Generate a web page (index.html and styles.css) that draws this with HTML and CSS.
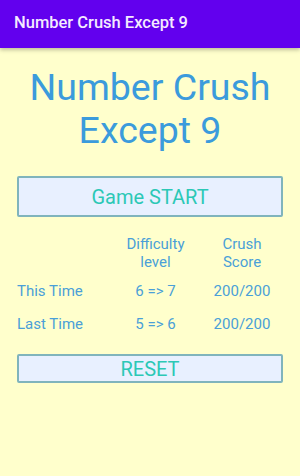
FILE: index.html
```html
<!DOCTYPE html>
<html lang="en">
<head>
    <meta charset="UTF-8">
    <meta name="viewport" content="width=device-width, initial-scale=1.0">
    <title>Number Crush Except 9</title>
    <link rel="stylesheet" href="styles.css">
</head>
<body>

<!-- App Bar -->
<div class="app-bar">Number Crush Except 9</div>

<div class="main">
    <h1 class="game-title">Number Crush<br>Except 9</h1>

    <button class="btn start-btn">Game START</button>

    <!-- Score Table -->
    <div class="score-table">
        <div class="cell"></div>
        <div class="cell head">Difficulty<br>level</div>
        <div class="cell head">Crush<br>Score</div>

        <div class="cell label">This Time</div>
        <div class="cell">6 =&gt; 7</div>
        <div class="cell">200/200</div>

        <div class="cell label">Last Time</div>
        <div class="cell">5 =&gt; 6</div>
        <div class="cell">200/200</div>
    </div>

    <button class="btn reset-btn">RESET</button>
</div>

</body>
</html>
```

FILE: styles.css
```css
/* General Styles */
body {
    font-family: Roboto, "Noto Sans", sans-serif;
    margin: 0;
    padding: 0;
    background-color: #ffffcc;
    height: 476px;
    overflow: hidden;
}

.app-bar {
    height: 48px;
    line-height: 46px;
    padding-left: 14px;
    background-color: #6200ee;
    color: #f4eaff;
    font-size: 16.5px;
    font-weight: 500;
    box-shadow: 0 2px 4px rgba(0, 0, 0, 0.25);
}

.main {
    padding: 0 17px;
    display: flex;
    flex-direction: column;
}

.game-title {
    margin: 18px 0 0;
    text-align: center;
    font-size: 37.5px;
    font-weight: 400;
    line-height: 43px;
    color: #3b9bdc;
}

.btn {
    width: 100%;
    background-color: #e8f0ff;
    border: 2px solid #80b4bc;
    border-radius: 2px;
    color: #2cc8b6;
    font-family: Roboto, "Noto Sans", sans-serif;
    font-size: 20px;
    padding: 0;
}

.start-btn {
    margin-top: 24px;
    height: 41px;
}

.reset-btn {
    margin-top: 14px;
    height: 29px;
}

.score-table {
    display: grid;
    grid-template-columns: 96px 85px 88px;
    margin-top: 18px;
    color: #4a9fd8;
    font-size: 15px;
    line-height: 18px;
}

.cell {
    text-align: center;
}

.score-table .head {
    margin-bottom: 3px;
}

.score-table .label {
    text-align: left;
}

.score-table .cell:nth-child(n+4) {
    padding: 8px 0 7px;
}
```
